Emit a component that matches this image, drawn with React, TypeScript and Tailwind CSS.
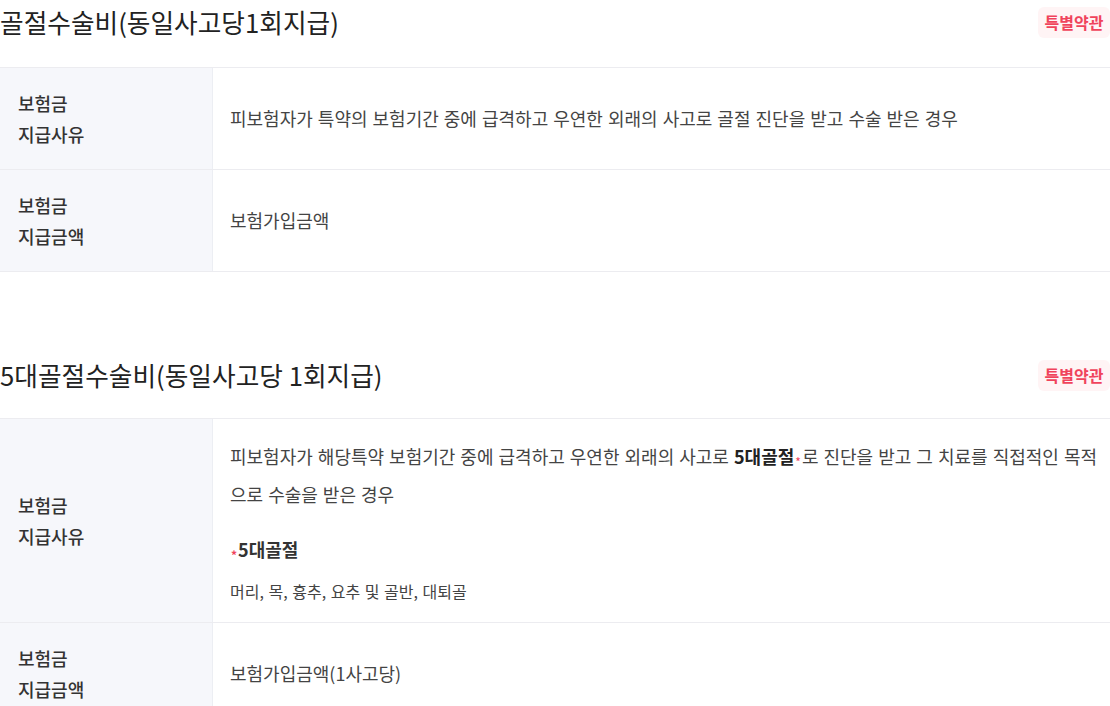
const font = { fontFamily: '"Noto Sans CJK KR", "Noto Sans", sans-serif' };

function Badge() {
  return (
    <span className="inline-flex h-[31px] w-[72px] items-center justify-center rounded-md bg-[#fff4f5] text-[16px] font-semibold text-[#f0435c]">
      특별약관
    </span>
  );
}

function Star() {
  return <span className="relative top-[3px] mx-[1px] text-[12px] leading-none text-[#f0435c]">*</span>;
}

function Row({ label, children }: { label: string[]; children: React.ReactNode }) {
  return (
    <div className="flex border-b border-[#ececf0]">
      <div className="flex w-[213px] shrink-0 flex-col justify-center border-r border-[#eceef3] bg-[#f6f7fb] px-[18px] pt-5 pb-[19px] text-[18px] font-medium leading-[31px] text-[#333]">
        {label.map((l) => (
          <div key={l}>{l}</div>
        ))}
      </div>
      <div className="flex flex-1 flex-col justify-center pt-[18px] pb-5 pl-[17px] pr-[6px] text-[18px] leading-[38px] text-[#444] [word-spacing:1px]">
        {children}
      </div>
    </div>
  );
}

function Section({ title, gap, children }: { title: string; gap: string; children: React.ReactNode }) {
  return (
    <section>
      <div className="flex items-center justify-between">
        <h2 className="text-[25.7px] leading-[44px] text-[#222]">{title}</h2>
        <Badge />
      </div>
      <div className={`${gap} border-t border-[#ececf0]`}>{children}</div>
    </section>
  );
}

export default function App() {
  return (
    <div className="w-[1110px] bg-white" style={font}>
      <Section title="골절수술비(동일사고당1회지급)" gap="mt-[23px]">
        <Row label={['보험금', '지급사유']}>
          피보험자가 특약의 보험기간 중에 급격하고 우연한 외래의 사고로 골절 진단을 받고 수술 받은 경우
        </Row>
        <Row label={['보험금', '지급금액']}>보험가입금액</Row>
      </Section>
      <div className="h-[81px]" />
      <Section title="5대골절수술비(동일사고당 1회지급)" gap="mt-[21px]">
        <Row label={['보험금', '지급사유']}>
          <p>
            피보험자가 해당특약 보험기간 중에 급격하고 우연한 외래의 사고로{' '}
            <b className="font-bold text-[#222]">5대골절</b>
            <Star />로 진단을 받고 그 치료를 직접적인 목적으로 수술을 받은 경우
          </p>
          <p className="mt-[23px] text-[18px] font-bold leading-[26px] text-[#333]">
            <Star />5대골절
          </p>
          <p className="mt-[18px] text-[16px] leading-[22px] text-[#444]">머리, 목, 흉추, 요추 및 골반, 대퇴골</p>
        </Row>
        <Row label={['보험금', '지급금액']}>보험가입금액(1사고당)</Row>
      </Section>
    </div>
  );
}
